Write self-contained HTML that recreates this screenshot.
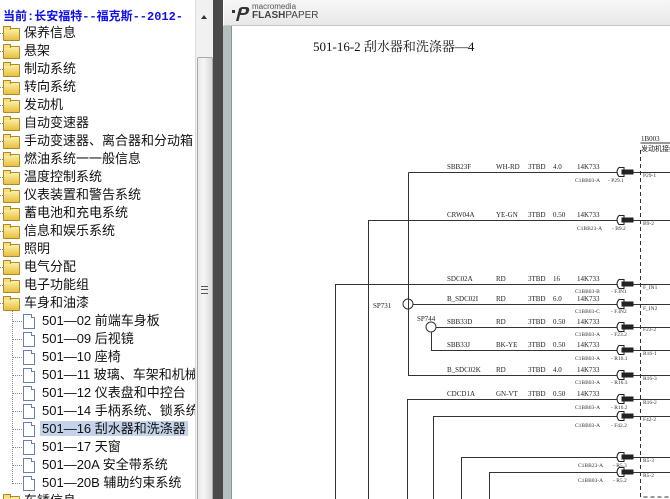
<!DOCTYPE html>
<html><head><meta charset="utf-8">
<style>
html,body{margin:0;padding:0;width:670px;height:499px;overflow:hidden;background:#fff;}
body{position:relative;font-family:"Liberation Sans","Noto Sans CJK SC",sans-serif;}
#tree{position:absolute;left:0;top:0;width:195px;height:499px;background:#fff;overflow:hidden;}
.hdr{position:absolute;left:3px;top:7px;font-size:12px;font-weight:bold;color:#1010e8;white-space:nowrap;font-family:"Liberation Mono","Noto Sans CJK SC",monospace;}
.r{position:absolute;left:0;height:18px;line-height:18px;font-size:13px;color:#111;white-space:nowrap;font-family:"Liberation Sans","Noto Sans CJK SC",sans-serif;}
.fd{position:absolute;left:3px;top:4px;width:15px;height:11px;background:linear-gradient(#fdf0a8,#e8c040);border:1px solid #b08a20;border-radius:1px;}
.fd:before{content:"";position:absolute;left:-1px;top:-3px;width:6px;height:3px;background:#f5dd80;border:1px solid #b08a20;border-bottom:none;}
.dot{position:absolute;left:0;top:9px;width:3px;border-top:1px dotted #888;}
.t{position:absolute;left:24px;top:0;}
.doc{position:absolute;left:23px;top:2px;width:10px;height:13px;background:#fff;border:1px solid #6a7fb0;}
.doc:after{content:"";position:absolute;right:-1px;top:-1px;width:3px;height:3px;background:#fff;border-left:1px solid #6a7fb0;border-bottom:1px solid #6a7fb0;}
.cd{position:absolute;left:13px;top:9px;width:9px;border-top:1px dotted #888;}
.ct{position:absolute;left:42px;top:0;}
.sel{background:#c5d3ea;padding:0 2px;margin-left:-2px}
#sb{position:absolute;left:195px;top:0;width:17px;height:499px;background:#f1f1f1;border-left:1px solid #dcdcdc;}
#thumb{position:absolute;left:1px;top:57px;width:14px;height:460px;background:linear-gradient(90deg,#e9e9e9,#f6f6f6 40%,#d9d9d9);border:1px solid #a9a9a9;border-radius:2px;}
#dark{position:absolute;left:213px;top:0;width:10px;height:499px;background:#4a4a4a;}
#fp{position:absolute;left:223px;top:0;width:447px;height:499px;background:#b4bfbf;}
#tb{position:absolute;left:0;top:0;width:447px;height:25px;background:linear-gradient(#f7f7f7,#e8e8e8);border-bottom:1px solid #c8c8c8;border-left:1px solid #fff}
#page{position:absolute;left:8px;top:26px;width:439px;height:473px;background:#fff;border-left:1px solid #8a9696;}
</style></head><body>
<div id="tree">
<div class="hdr">当前:长安福特--福克斯--2012-</div>
<div class="r" style="top:24px"><span class="dot"></span><span class="fd"></span><span class="t">保养信息</span></div>
<div class="r" style="top:42px"><span class="dot"></span><span class="fd"></span><span class="t">悬架</span></div>
<div class="r" style="top:60px"><span class="dot"></span><span class="fd"></span><span class="t">制动系统</span></div>
<div class="r" style="top:78px"><span class="dot"></span><span class="fd"></span><span class="t">转向系统</span></div>
<div class="r" style="top:96px"><span class="dot"></span><span class="fd"></span><span class="t">发动机</span></div>
<div class="r" style="top:114px"><span class="dot"></span><span class="fd"></span><span class="t">自动变速器</span></div>
<div class="r" style="top:132px"><span class="dot"></span><span class="fd"></span><span class="t">手动变速器、离合器和分动箱</span></div>
<div class="r" style="top:150px"><span class="dot"></span><span class="fd"></span><span class="t">燃油系统一一般信息</span></div>
<div class="r" style="top:168px"><span class="dot"></span><span class="fd"></span><span class="t">温度控制系统</span></div>
<div class="r" style="top:186px"><span class="dot"></span><span class="fd"></span><span class="t">仪表装置和警告系统</span></div>
<div class="r" style="top:204px"><span class="dot"></span><span class="fd"></span><span class="t">蓄电池和充电系统</span></div>
<div class="r" style="top:222px"><span class="dot"></span><span class="fd"></span><span class="t">信息和娱乐系统</span></div>
<div class="r" style="top:240px"><span class="dot"></span><span class="fd"></span><span class="t">照明</span></div>
<div class="r" style="top:258px"><span class="dot"></span><span class="fd"></span><span class="t">电气分配</span></div>
<div class="r" style="top:276px"><span class="dot"></span><span class="fd"></span><span class="t">电子功能组</span></div>
<div class="r" style="top:294px"><span class="dot"></span><span class="fd"></span><span class="t">车身和油漆</span></div>
<div style="position:absolute;left:12px;top:311px;height:173px;border-left:1px dotted #888"></div>
<div class="r" style="top:312px"><span class="cd"></span><span class="doc"></span><span class="ct">501—02 前端车身板</span></div>
<div class="r" style="top:330px"><span class="cd"></span><span class="doc"></span><span class="ct">501—09 后视镜</span></div>
<div class="r" style="top:348px"><span class="cd"></span><span class="doc"></span><span class="ct">501—10 座椅</span></div>
<div class="r" style="top:366px"><span class="cd"></span><span class="doc"></span><span class="ct">501—11 玻璃、车架和机械</span></div>
<div class="r" style="top:384px"><span class="cd"></span><span class="doc"></span><span class="ct">501—12 仪表盘和中控台</span></div>
<div class="r" style="top:402px"><span class="cd"></span><span class="doc"></span><span class="ct">501—14 手柄系统、锁系统、</span></div>
<div class="r" style="top:420px"><span class="cd"></span><span class="doc"></span><span class="ct"><span class="sel">501—16 刮水器和洗涤器</span></span></div>
<div class="r" style="top:438px"><span class="cd"></span><span class="doc"></span><span class="ct">501—17 天窗</span></div>
<div class="r" style="top:456px"><span class="cd"></span><span class="doc"></span><span class="ct">501—20A 安全带系统</span></div>
<div class="r" style="top:474px"><span class="cd"></span><span class="doc"></span><span class="ct">501—20B 辅助约束系统</span></div>
<div class="r" style="top:492px"><span class="dot"></span><span class="fd"></span><span class="t">车锈信息</span></div>
</div>
<div id="sb">
<div style="position:absolute;left:5px;top:15px;width:0;height:0;border-left:3px solid transparent;border-right:3px solid transparent;border-bottom:4px solid #333"></div>
<div id="thumb"><div style="position:absolute;left:3px;top:228px;width:7px;height:6px;border-top:1px solid #555;border-bottom:1px solid #555"></div><div style="position:absolute;left:3px;top:231px;width:7px;border-top:1px solid #555"></div></div>
</div>
<div id="dark"></div>
<div id="fp">
<div id="tb">
<svg width="20" height="16" style="position:absolute;left:7px;top:6px" viewBox="0 0 20 16"><path d="M5 15 L8 3 Q9 1 12 1 L15 1 Q19 1 18 5 Q17 9 12 9 L9 9 L7.5 15 Z M10 7 L12.5 7 Q14.5 7 15 5 Q15.3 3 13.5 3 L11 3 Z" fill="#333" fill-rule="evenodd"/><rect x="1" y="4" width="3" height="3" fill="#333"/></svg>
<div style="position:absolute;left:28px;top:3px;font-size:8px;color:#555;line-height:8px">macromedia</div>
<div style="position:absolute;left:28px;top:11px;font-size:10px;color:#444;line-height:10px"><b>FLASH</b>PAPER</div>
</div>
<div id="page"></div>
</div>
<svg width="670" height="499" style="position:absolute;left:0;top:0" font-family="Liberation Serif, serif">
<text x="313" y="51" font-size="13" fill="#111" font-family="Liberation Serif, Noto Serif CJK SC, serif">501-16-2 刮水器和洗涤器—4</text>
<g stroke="#333" stroke-width="1" fill="none">
<path d="M408.5 172.5 H670 M408.5 172.5 V375.5 H670"/>
<path d="M368.5 499 V220.5 H670"/>
<path d="M335.5 499 V284.5 H670"/>
<path d="M413 304.5 H670"/>
<path d="M436 327.5 H670 M431.5 332 V350.5 H670"/>
<path d="M407.5 499 V399.5 H670"/>
<path d="M433.5 499 V416.5 H670"/>
<path d="M461.5 499 V457.5 H670"/>
<path d="M489.5 499 V472.5 H670"/>
<circle cx="408" cy="304" r="5"/>
<circle cx="431" cy="327" r="5"/>
<path d="M640.5 150 V497 H670" stroke-dasharray="4,3"/>
<path d="M640.5 143 H670"/>
</g>
<g fill="#fff" stroke="#222" stroke-width="1">
<g id="c"><path d="M624 167.5 H619 Q615 172 619 176.5 H624 Z"/><rect x="622" y="170" width="11" height="4" fill="#222"/></g>
<use href="#c" y="48"/><use href="#c" y="112"/><use href="#c" y="132"/><use href="#c" y="155"/><use href="#c" y="178"/><use href="#c" y="203"/><use href="#c" y="227"/><use href="#c" y="244"/><use href="#c" y="285"/><use href="#c" y="300"/>
</g>
<g font-size="7" fill="#222">
<text x="373" y="308">SP731</text><text x="417" y="321">SP744</text>
<text x="641" y="141">1B003</text><text x="641" y="151" font-family="Noto Sans CJK SC, sans-serif">发动机接线</text>
<text x="447" y="169">SBB23F</text><text x="496" y="169">WH-RD</text><text x="528" y="169">3TBD</text><text x="553" y="169">4.0</text><text x="577" y="169">14K733</text>
<text x="447" y="217">CRW04A</text><text x="496" y="217">YE-GN</text><text x="528" y="217">3TBD</text><text x="553" y="217">0.50</text><text x="577" y="217">14K733</text>
<text x="447" y="281">SDC02A</text><text x="496" y="281">RD</text><text x="528" y="281">3TBD</text><text x="553" y="281">16</text><text x="577" y="281">14K733</text>
<text x="447" y="301">B_SDC02I</text><text x="496" y="301">RD</text><text x="528" y="301">3TBD</text><text x="553" y="301">6.0</text><text x="577" y="301">14K733</text>
<text x="447" y="324">SBB33D</text><text x="496" y="324">RD</text><text x="528" y="324">3TBD</text><text x="553" y="324">0.50</text><text x="577" y="324">14K733</text>
<text x="447" y="347">SBB33J</text><text x="496" y="347">BK-YE</text><text x="528" y="347">3TBD</text><text x="553" y="347">0.50</text><text x="577" y="347">14K733</text>
<text x="447" y="372">B_SDC02K</text><text x="496" y="372">RD</text><text x="528" y="372">3TBD</text><text x="553" y="372">4.0</text><text x="577" y="372">14K733</text>
<text x="447" y="396">CDCD1A</text><text x="496" y="396">GN-VT</text><text x="528" y="396">3TBD</text><text x="553" y="396">0.50</text><text x="577" y="396">14K733</text>
</g>
<g font-size="5.5" fill="#333">
<text x="575" y="182">C1BB03-A</text><text x="608" y="182">- P29.1</text><text x="643" y="177">P29-1</text>
<text x="577" y="230">C1BB23-A</text><text x="612" y="230">- B9.2</text><text x="643" y="225">B9-2</text>
<text x="575" y="293">C1BB03-B</text><text x="611" y="293">- F.IN1</text><text x="643" y="289">F_IN1</text>
<text x="575" y="313">C1BB03-C</text><text x="611" y="313">- F.IN2</text><text x="643" y="310">F_IN2</text>
<text x="575" y="336">C1BB03-A</text><text x="611" y="336">- F23.2</text><text x="643" y="331">F23-2</text>
<text x="575" y="360">C1BB03-A</text><text x="611" y="360">- R16.1</text><text x="643" y="355">R16-1</text>
<text x="575" y="384">C1BB03-A</text><text x="611" y="384">- R16.3</text><text x="643" y="380">R16-3</text>
<text x="575" y="409">C1BB03-A</text><text x="611" y="409">- R16.2</text><text x="643" y="404">R16-2</text>
<text x="575" y="427">C1BB03-A</text><text x="611" y="427">- F42.2</text><text x="643" y="421">F42-2</text>
<text x="578" y="467">C1BB23-A</text><text x="613" y="467">- R5.3</text><text x="643" y="462">R5-3</text>
<text x="578" y="482">C1BB03-A</text><text x="613" y="482">- R5.2</text><text x="643" y="477">R5-2</text>
</g>
</svg>
</body></html>
